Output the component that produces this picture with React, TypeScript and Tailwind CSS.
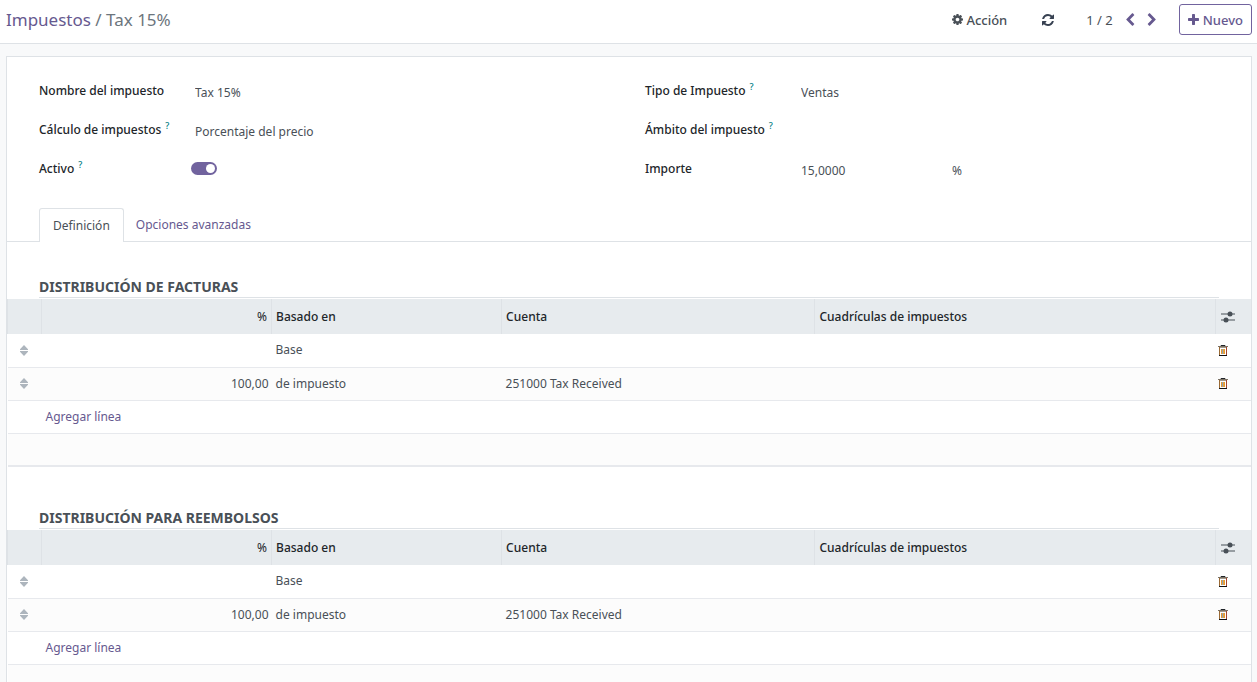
import type { ReactNode } from "react";

type IconProps = { className?: string; box: string; d: string };

function Icon({ className, box, d }: IconProps) {
  return (
    <svg viewBox={box} className={className} fill="currentColor" aria-hidden="true">
      <path d={d} />
    </svg>
  );
}

const COG =
  "M1024 896q0-106-75-181t-181-75-181 75-75 181 75 181 181 75 181-75 75-181zm512-109v222q0 12-8 23t-20 13l-185 28q-19 54-39 91 35 50 107 138 10 12 10 25t-9 23q-27 37-99 108t-94 71q-12 0-26-9l-138-108q-44 23-91 38-16 136-29 186-7 28-36 28h-222q-14 0-24.5-8.5t-11.5-21.5l-28-184q-49-16-90-37l-141 107q-10 9-25 9-14 0-25-11-126-114-165-168-7-10-7-23 0-12 8-23 15-21 51-66.5t54-70.5q-27-50-41-99l-183-27q-13-2-21-12.5t-8-23.5v-222q0-12 8-23t19-13l186-28q14-46 39-92-40-57-107-138-10-12-10-24 0-10 9-23 26-36 98.5-107.5t94.5-71.5q13 0 26 10l138 107q44-23 91-38 16-136 29-186 7-28 36-28h222q14 0 24.5 8.5t11.5 21.5l28 184q49 16 90 37l142-107q9-9 24-9 13 0 25 10 129 119 165 170 7 8 7 22 0 12-8 23-15 21-51 66.5t-54 70.5q26 50 41 98l183 28q13 2 21 12.5t8 23.5z";
const REFRESH =
  "M1639 1056q0 5-1 7-64 268-268 434.5t-478 166.5q-146 0-282.5-55t-243.5-157l-129 129q-19 19-45 19t-45-19-19-45v-448q0-26 19-45t45-19h448q26 0 45 19t19 45-19 45l-137 137q71 66 161 102t187 36q134 0 250-65t186-179q11-17 53-117 8-23 30-23h192q13 0 22.5 9.5t9.5 22.5zm25-800v448q0 26-19 45t-45 19h-448q-26 0-45-19t-19-45 19-45l138-138q-148-137-349-137-134 0-250 65t-186 179q-11 17-53 117-8 23-30 23h-199q-13 0-22.5-9.5t-9.5-22.5v-7q65-268 270-434.5t480-166.5q146 0 284 55.5t245 156.5l130-129q19-19 45-19t45 19 19 45z";
const PLUS =
  "M1600 736v192q0 40-28 68t-68 28h-416v416q0 40-28 68t-68 28h-192q-40 0-68-28t-28-68v-416h-416q-40 0-68-28t-28-68v-192q0-40 28-68t68-28h416v-416q0-40 28-68t68-28h192q40 0 68 28t28 68v416h416q40 0 68 28t28 68z";
const LEFT =
  "M1427 301l-531 531 531 531q19 19 19 45t-19 45l-166 166q-19 19-45 19t-45-19l-742-742q-19-19-19-45t19-45l742-742q19-19 45-19t45 19l166 166q19 19 19 45t-19 45z";
const RIGHT =
  "M1363 877l-742 742q-19 19-45 19t-45-19l-166-166q-19-19-19-45t19-45l531-531-531-531q-19-19-19-45t19-45l166-166q19-19 45-19t45 19l742 742q19 19 19 45t-19 45z";

function Trash() {
  return (
    <svg viewBox="0 0 10 11" className="h-[11px] w-2.5" fill="none" aria-hidden="true">
      <path d="M3 1V.5h4V1" stroke="#212529" />
      <path d="M0 1.5h10" stroke="#7a7164" />
      <path d="M1 2.5h8" stroke="#a39a8c" />
      <path d="M1.5 2v8" stroke="#9a6a35" />
      <path d="M8.5 2v8" stroke="#a4452c" />
      <path d="M1 10.5h8" stroke="#111111" />
      <path d="M3.5 4v5M6.5 4v5" stroke="#e79a2e" />
      <path d="M4.5 4v5" stroke="#8fa0b5" />
      <path d="M5.5 4v5" stroke="#e0a548" />
    </svg>
  );
}

function Sliders() {
  return (
    <svg viewBox="0 0 14 12" className="h-3 w-3.5 text-[#495057]" fill="currentColor" aria-hidden="true">
      <path d="M0 2.5h14v1H0zM0 8.5h14v1H0z" />
      <circle cx="9" cy="3" r="2.5" />
      <circle cx="5" cy="9" r="2.5" />
    </svg>
  );
}

function Handle() {
  return (
    <svg viewBox="0 0 8 11" className="ml-3 h-[11px] w-2" fill="#adb5bd" aria-hidden="true">
      <path d="M4 0l4 4.2v.8H0v-.8zM0 6h8v.8L4 11 0 6.8z" />
    </svg>
  );
}

function Label({ children, help, htmlFor }: { children: ReactNode; help?: boolean; htmlFor: string }) {
  return (
    <label htmlFor={htmlFor} className="flex h-5 w-[156px] shrink-0 gap-1 whitespace-nowrap font-medium text-[#212529]">
      {children}
      {help && <sup className="top-0 text-[9px] leading-3 text-[#017e84]">?</sup>}
    </label>
  );
}

const field = "h-5 min-w-0 bg-transparent text-[#495057] outline-none";

function DistributionTable({ title }: { title: string }) {
  const head = "border-l border-[#dee2e6] px-1 text-left font-medium text-[#212529]";
  return (
    <section>
      <h2 className="mx-8 border-b border-[#dee2e6] text-sm leading-5 font-bold text-[#495057] uppercase">{title}</h2>
      <table aria-label={title} className="mt-px w-full table-fixed border-collapse">
        <colgroup>
          <col className="w-[34px]" />
          <col className="w-[18.5%]" />
          <col className="w-[18.5%]" />
          <col className="w-[25.2%]" />
          <col />
          <col className="w-9" />
        </colgroup>
        <thead>
          <tr className="h-[35px] bg-[#e7ebee]">
            <th className="border-l border-[#dee2e6]" />
            <th className={head}>
              <span className="block text-right font-normal">%</span>
            </th>
            <th className={head}>Basado en</th>
            <th className={head}>Cuenta</th>
            <th className={head}>Cuadrículas de impuestos</th>
            <th className="border-l border-[#dee2e6]">
              <button type="button" aria-label="Columnas opcionales" className="block pl-[5px]">
                <Sliders />
              </button>
            </th>
          </tr>
        </thead>
        <tbody className="text-[#495057]">
          {[
            ["", "Base", ""],
            ["100,00", "de impuesto", "251000 Tax Received"],
          ].map(([percent, based, account]) => (
            <tr key={based} className="h-[33px] border-b border-[#e7e9ed] even:bg-[#fcfcfc]">
              <td>
                <Handle />
              </td>
              <td className="pr-[3px] text-right">{percent}</td>
              <td className="px-1">{based}</td>
              <td className="px-1">{account}</td>
              <td />
              <td>
                <button type="button" aria-label="Eliminar línea" className="block pl-[3px]">
                  <Trash />
                </button>
              </td>
            </tr>
          ))}
          <tr className="h-[33px] border-b border-[#e7e9ed]">
            <td />
            <td colSpan={5} className="px-1">
              <a href="#agregar" className="text-[#66598f]">Agregar línea</a>
            </td>
          </tr>
          <tr className="h-[33px] border-b-2 border-[#e7e9ed] bg-[#fcfcfc]">
            <td colSpan={6} />
          </tr>
        </tbody>
      </table>
    </section>
  );
}

export default function App() {
  return (
    <div className="flex h-screen flex-col overflow-hidden bg-[#f8f9fa] font-['Noto_Sans','Open_Sans',sans-serif] text-xs leading-5">
      <header className="flex h-11 shrink-0 items-center border-b border-[#dee2e6] bg-white pr-[5px] pb-1 pl-1.5 text-[13px] leading-5">
        <nav aria-label="Ruta" className="flex-1 text-[17px] text-[#6c757d]">
          <a href="#impuestos" className="text-[#66598f]">Impuestos</a> / Tax 15%
        </nav>
        <button type="button" className="flex items-center gap-[3px] font-medium text-[#495057]">
          <Icon className="size-[11px]" box="0 128 1536 1536" d={COG} />
          Acción
        </button>
        <button type="button" aria-label="Actualizar" className="ml-[35px] text-[#374151]">
          <Icon className="size-3" box="128 128 1536 1536" d={REFRESH} />
        </button>
        <span className="ml-8 text-[#495057]">1 / 2</span>
        <button type="button" aria-label="Anterior" className="ml-2.5 text-[#66598f]">
          <Icon className="size-3.5" box="0 0 1792 1792" d={LEFT} />
        </button>
        <button type="button" aria-label="Siguiente" className="ml-2 text-[#66598f]">
          <Icon className="size-3.5" box="0 0 1792 1792" d={RIGHT} />
        </button>
        <button type="button" className="ml-5 flex h-[31px] items-center gap-1 rounded-[3px] border border-[#71639e] px-2 font-medium text-[#66598f]">
          <Icon className="size-[11px]" box="192 128 1408 1408" d={PLUS} />
          Nuevo
        </button>
      </header>

      <main className="min-h-0 flex-1 overflow-y-auto pt-3 pr-[5px] pl-1.5 [scrollbar-width:none]">
        <div className="border border-[#dee2e6] bg-white pt-6">
          <div className="grid grid-cols-2 px-8">
            <div className="flex flex-col gap-[19px]">
              <div className="flex h-5">
                <Label htmlFor="nombre">Nombre del impuesto</Label>
                <input id="nombre" defaultValue="Tax 15%" className={field + " mt-0.5"} />
              </div>
              <div className="flex h-5">
                <Label htmlFor="calculo" help>Cálculo de impuestos</Label>
                <select id="calculo" className={field + " mt-0.5 appearance-none"}>
                  <option>Porcentaje del precio</option>
                </select>
              </div>
              <div className="flex h-5">
                <Label htmlFor="activo" help>Activo</Label>
                <input id="activo" type="checkbox" role="switch" defaultChecked className="mt-[3px] -ml-1 flex h-[13px] w-[26px] appearance-none items-center rounded-full bg-[#adb5bd] px-0.5 before:size-[9px] before:rounded-full before:bg-white checked:justify-end checked:bg-[#71639e]" />
              </div>
            </div>
            <div className="flex flex-col gap-[19px] pl-4">
              <div className="flex h-5">
                <Label htmlFor="tipo" help>Tipo de Impuesto</Label>
                <select id="tipo" className={field + " mt-0.5 appearance-none"}>
                  <option>Ventas</option>
                </select>
              </div>
              <div className="flex h-5">
                <Label htmlFor="ambito" help>Ámbito del impuesto</Label>
                <select id="ambito" className={field + " mt-0.5 appearance-none"}>
                  <option></option>
                </select>
              </div>
              <div className="flex h-5">
                <Label htmlFor="importe">Importe</Label>
                <input id="importe" defaultValue="15,0000" className={field + " mt-0.5 w-[151px]"} />
                <span className="mt-0.5 text-[#495057]">%</span>
              </div>
            </div>
          </div>

          <div role="tablist" className="mt-[29px] flex border-b border-[#dee2e6] px-8">
            <button type="button" role="tab" aria-selected="true" className="-mb-px h-[34px] rounded-t-[3px] border border-b-0 border-[#dee2e6] bg-white px-[13px] text-[#495057]">
              Definición
            </button>
            <button type="button" role="tab" aria-selected="false" className="h-[33px] px-3 text-[#66598f]">
              Opciones avanzadas
            </button>
          </div>

          <div className="flex flex-col gap-[41px] pt-[35px] pb-8">
            <DistributionTable title="Distribución de facturas" />
            <DistributionTable title="Distribución para reembolsos" />
          </div>
        </div>
      </main>
    </div>
  );
}
